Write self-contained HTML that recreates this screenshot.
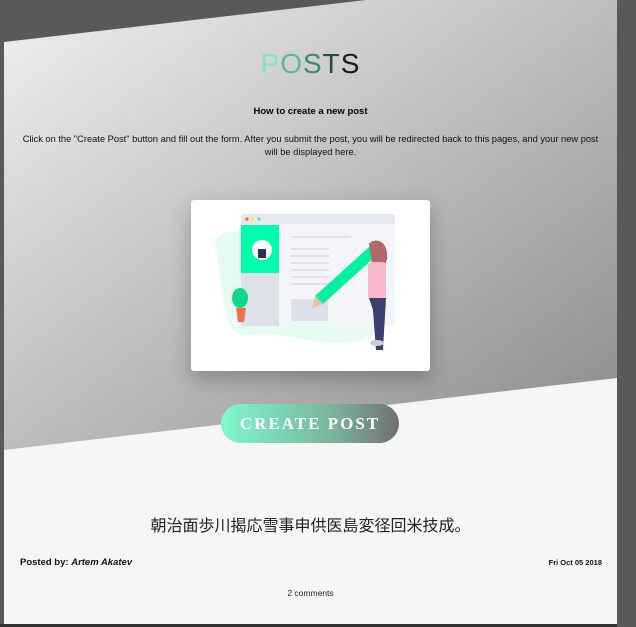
<!DOCTYPE html>
<html><head><meta charset="utf-8"><style>
body{margin:0;width:636px;height:627px;background:#595959;position:relative;overflow:hidden;font-family:"Liberation Sans Narrow","Liberation Sans","Noto Sans CJK JP",sans-serif}
.page{position:absolute;left:4px;top:0;width:613px;height:624px;background:#f6f6f6;overflow:hidden}
.bg{position:absolute;left:0;top:0}
.t{position:absolute;left:0;width:613px;text-align:center}
</style></head><body>
<div class="page">
<svg class="bg" width="613" height="624">
<defs><linearGradient id="g" x1="0" y1="0" x2="1" y2="1"><stop offset="0" stop-color="#f0f0f0"/><stop offset="1" stop-color="#8a8a8a"/></linearGradient></defs>
<rect width="613" height="624" fill="#f6f6f6"/>
<polygon points="0,0 613,0 613,378 0,450" fill="url(#g)"/>
<polygon points="0,0 362,0 0,42" fill="#595959"/>
</svg>
<div class="t" style="top:48px;font-size:28px;letter-spacing:1px;"><span style="color:#7de8c0">P</span><span style="color:#5cb896">O</span><span style="color:#3d8a6c">S</span><span style="color:#245040">T</span><span style="color:#1a1a1a">S</span></div>
<div class="t" style="top:106px;font-size:9.5px;font-weight:bold;color:#000">How to create a new post</div>
<div class="t" style="top:133px;font-size:9.3px;line-height:13px;color:#111">Click on the "Create Post" button and fill out the form. After you submit the post, you will be redirected back to this pages, and your new post<br>will be displayed here.</div>
<div style="position:absolute;left:187px;top:200px;width:239px;height:171px;background:#fff;border-radius:3px;box-shadow:0 8px 20px rgba(0,0,0,.25)">
<svg width="239" height="171">
<path d="M25,50 C20,30 45,28 60,35 L180,80 C215,85 210,130 170,140 C130,150 90,130 60,135 C30,140 35,100 25,50Z" fill="#e6fbf2"/>
<rect x="50" y="14" width="154" height="112" rx="3" fill="#f4f5f8"/>
<rect x="50" y="14" width="154" height="10" rx="3" fill="#e5e8ef"/>
<circle cx="56" cy="19" r="1.6" fill="#f55"/><circle cx="62" cy="19" r="1.6" fill="#ee3"/><circle cx="68" cy="19" r="1.6" fill="#6e9"/>
<rect x="50" y="25" width="38" height="48" fill="#00ffaa"/>
<rect x="50" y="73" width="38" height="53" fill="#dde1ea"/>
<circle cx="71" cy="50" r="10" fill="#fff"/><rect x="67" y="49" width="8" height="9" fill="#2a3050"/>
<g fill="#e0e2ec"><rect x="100" y="36" width="60" height="2"/><rect x="100" y="48" width="38" height="2"/><rect x="100" y="55" width="38" height="2"/><rect x="100" y="62" width="38" height="2"/><rect x="100" y="69" width="38" height="2"/><rect x="100" y="76" width="38" height="2"/><rect x="100" y="83" width="38" height="2"/></g>
<rect x="100" y="99" width="37" height="22" fill="#dde0ea"/>
<path d="M124,96 L178,47 L186,55 L132,104 Z" fill="#00f0a0"/><path d="M124,96 L132,104 L121,108Z" fill="#e8c0a0"/>
<path d="M178,44 C182,38 198,38 196,60 L190,72 L182,70Z" fill="#b06868"/>
<rect x="177" y="62" width="18" height="38" rx="4" fill="#f9b8cc"/>
<path d="M178,98 L195,98 L192,150 L185,150 L182,110Z" fill="#3b3f70"/>
<ellipse cx="186" cy="143" rx="7" ry="3" fill="#c9c9d8"/>
<ellipse cx="49" cy="98" rx="8" ry="10" fill="#10d88a"/><path d="M45,108 L55,108 L53,122 L47,122Z" fill="#f07050"/>
</svg></div>
<div style="position:absolute;left:217px;top:404px;width:178px;height:39px;border-radius:20px;background:linear-gradient(90deg,#80f8cc,#7ab09a 65%,#707070);color:#fff;font-family:'Liberation Serif',serif;font-size:17px;font-weight:bold;letter-spacing:2px;text-align:center;line-height:39px">CREATE POST</div>
<div class="t" style="top:512px;font-size:16px;color:#222;font-family:'Noto Sans CJK JP',sans-serif">朝治面歩川揭応雪事申供医島変径回米技成。</div>
<div style="position:absolute;left:16px;top:557px;font-size:9.5px;font-weight:bold;color:#111">Posted by: <i>Artem Akatev</i></div>
<div style="position:absolute;right:15px;top:558px;font-size:7.5px;font-weight:bold;color:#111">Fri Oct 05 2018</div>
<div class="t" style="top:588px;font-size:8.5px;color:#222">2 comments</div>
</div>
<div style="position:absolute;left:0;top:624px;width:617px;height:3px;background:#333"></div>
</body></html>
